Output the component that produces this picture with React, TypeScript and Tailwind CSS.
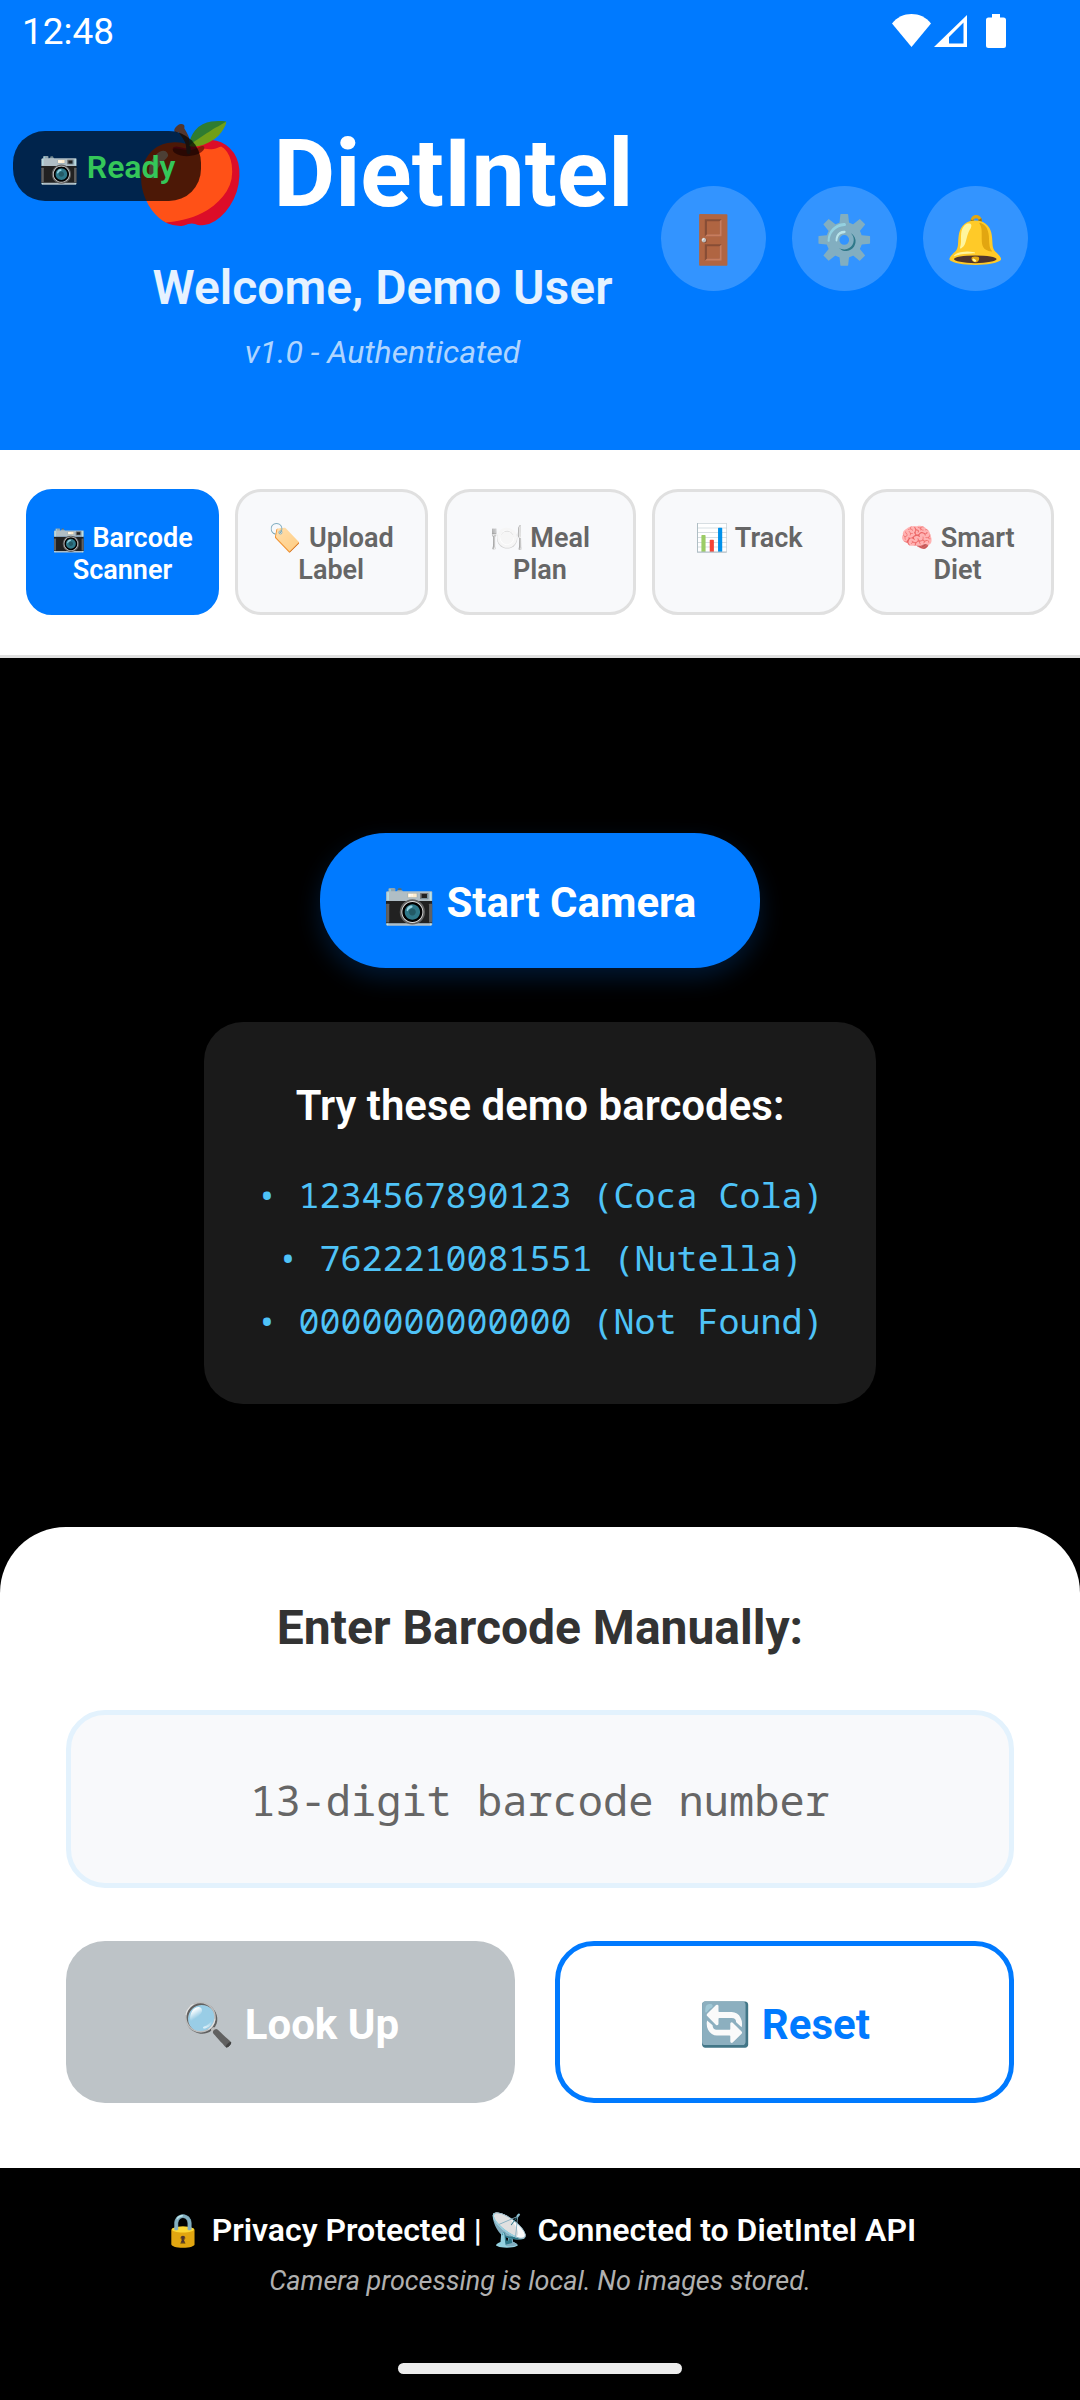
import React from "react";

const tabs = [
  { icon: "📷", label: "Barcode Scanner", active: true },
  { icon: "🏷️", label: "Upload Label" },
  { icon: "🍽️", label: "Meal Plan" },
  { icon: "📊", label: "Track" },
  { icon: "🧠", label: "Smart Diet" },
];

const actions = [
  { icon: "🚪", label: "Log out" },
  { icon: "⚙️", label: "Settings" },
  { icon: "🔔", label: "Notifications" },
];

const demoBarcodes = [
  "1234567890123 (Coca Cola)",
  "7622210081551 (Nutella)",
  "0000000000000 (Not Found)",
];

function StatusBar() {
  return (
    <div className="flex h-[62px] items-center justify-between pr-[74px] pl-[22px]">
      <span className="pt-0.5 text-[37px] leading-[44px]">12:48</span>
      <div className="flex items-center">
        <svg width="39" height="34" viewBox="0 0 39 34" fill="currentColor" aria-label="Wi-Fi">
          <path d="M19.500 33L0 9.500C5 3 12 0 19.500 0S34 3 39 9.500Z" />
        </svg>
        <svg className="ml-[3px]" width="33" height="34" viewBox="0 0 33 34" fill="currentColor" aria-label="Signal">
          <path fillRule="evenodd" d="M33 1V33H0ZM29.500 8.500L15 23V29.500H29.500Z" />
        </svg>
        <svg className="ml-[19px]" width="20" height="34" viewBox="0 0 20 34" fill="currentColor" aria-label="Battery">
          <path d="M6 0H14V3.500H17.500Q20 3.500 20 6V31.500Q20 34 17.500 34H2.500Q0 34 0 31.500V6Q0 3.500 2.500 3.500H6Z" />
        </svg>
      </div>
    </div>
  );
}

function Header() {
  return (
    <header className="relative bg-[#007aff] pb-[78px] text-white">
      <StatusBar />
      <div className="flex items-center pt-[52px] pr-13 pl-[104px]">
        <div className="flex flex-1 flex-col items-center whitespace-nowrap">
          <h1 className="text-[95px] leading-[120px] font-bold">🍎 DietIntel</h1>
          <p className="mt-[26px] text-[48px] leading-[56px] font-semibold text-white/90">Welcome, Demo User</p>
          <p className="mt-4 text-[32px] leading-10 text-white/70 italic">v1.0 - Authenticated</p>
        </div>
        <div className="mb-[10px] flex shrink-0 gap-[26px]">
          {actions.map((a) => (
            <button
              key={a.label}
              aria-label={a.label}
              className="flex size-[105px] items-center justify-center rounded-full bg-white/20 pt-[3px] text-[47px] leading-[56px]"
            >
              {a.icon}
            </button>
          ))}
        </div>
      </div>
      <div className="absolute top-[131px] left-[13px] rounded-[32px] bg-black/70 px-[26px] pt-[17px] pb-[15px] text-[32px] leading-[38px] font-semibold text-[#34c759]">
        📷 Ready
      </div>
    </header>
  );
}

function Tabs() {
  return (
    <nav className="flex gap-4 border-b-[3px] border-[#e0e0e0] bg-white px-[26px] pt-[39px] pb-10">
      {tabs.map((t) => (
        <button
          key={t.label}
          className={
            "flex flex-1 items-start justify-center rounded-[26px] border-[3px] px-5 pt-[30px] pb-[26px] text-center text-[27px] leading-8 font-semibold " +
            (t.active
              ? "border-[#007aff] bg-[#007aff] text-white"
              : "border-[#e0e0e0] bg-[#f8f9fb] text-[#666666]")
          }
        >
          {t.icon} {t.label}
        </button>
      ))}
    </nav>
  );
}

function Camera() {
  return (
    <section className="flex flex-1 flex-col items-center justify-center gap-[54px]">
      <button className="rounded-[66px] bg-[#007aff] px-16 pt-11 pb-10 text-[42px] leading-[51px] font-bold text-white shadow-[0_10px_24px_rgba(0,122,255,0.2)]">
        📷 Start Camera
      </button>
      <div className="rounded-[39px] bg-[#1a1a1a] px-[52px] pt-[59px] pb-[52px] text-center">
        <h2 className="text-[42px] leading-[50px] font-semibold text-white">Try these demo barcodes:</h2>
        <ul className="mt-8 font-['Noto_Sans_Mono','Droid_Sans_Mono','DejaVu_Sans_Mono',monospace] text-[35px] leading-[63px] text-[#4fc3f7]">
          {demoBarcodes.map((b) => (
            <li key={b}>• {b}</li>
          ))}
        </ul>
      </div>
    </section>
  );
}

function ManualEntry() {
  return (
    <form className="relative -mt-13 rounded-t-[66px] bg-white px-[66px] pt-[73px] pb-[65px]">
      <label htmlFor="barcode" className="block text-center text-[48px] leading-[56px] font-bold text-[#333333]">
        Enter Barcode Manually:
      </label>
      <input
        id="barcode"
        placeholder="13-digit barcode number"
        className="mt-[54px] block h-[178px] w-full rounded-[39px] border-[5px] border-[#e3f2fd] bg-[#f8f9fb] text-center font-['Noto_Sans_Mono','Droid_Sans_Mono','DejaVu_Sans_Mono',monospace] text-[42px] text-[#333333] placeholder:text-[#666666]"
      />
      <div className="mt-[53px] flex gap-10">
        <button
          type="button"
          className="flex-1 rounded-[39px] bg-[#bdc3c7] px-10 pt-[58px] pb-[52px] text-[42px] leading-[52px] font-bold text-white"
        >
          🔍 Look Up
        </button>
        <button
          type="button"
          className="flex-1 rounded-[39px] border-[5px] border-[#007aff] bg-white px-10 pt-[53px] pb-[47px] text-[42px] leading-[52px] font-bold text-[#007aff]"
        >
          🔄 Reset
        </button>
      </div>
    </form>
  );
}

function Footer() {
  return (
    <footer className="flex flex-col items-center bg-black pt-[42px] pb-[26px] text-center">
      <p className="text-[32px] leading-[40px] font-semibold text-white">
        🔒 Privacy Protected | 📡 Connected to DietIntel API
      </p>
      <p className="mt-[14px] text-[27px] leading-[34px] text-[#b0b0b0] italic">
        Camera processing is local. No images stored.
      </p>
      <div className="mt-[65px] h-[11px] w-[284px] rounded-full bg-[#ececec]" />
    </footer>
  );
}

export default function App() {
  return (
    <div className="flex min-h-screen flex-col bg-black font-['Roboto','Noto_Color_Emoji',sans-serif]">
      <Header />
      <Tabs />
      <Camera />
      <ManualEntry />
      <Footer />
    </div>
  );
}
